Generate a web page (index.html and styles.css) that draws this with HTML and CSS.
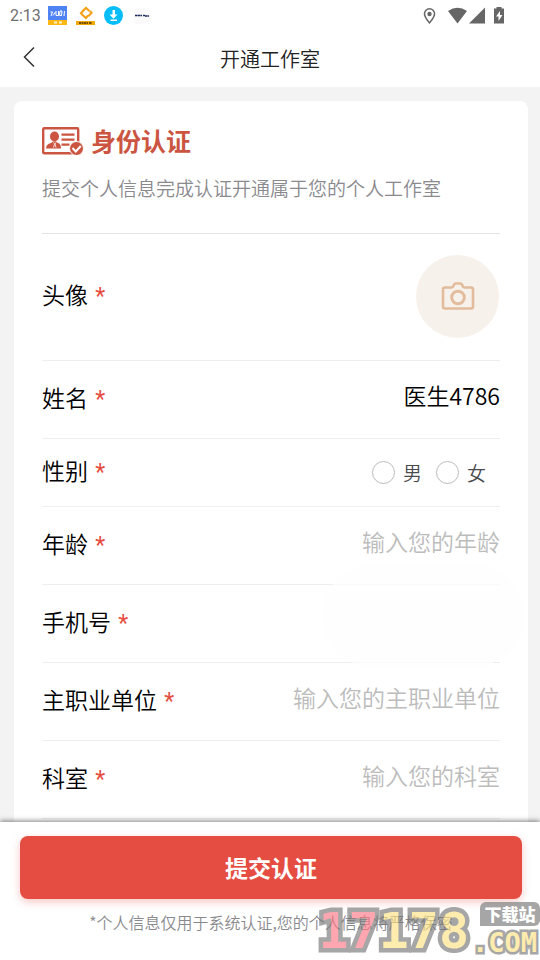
FILE: index.html
```html
<!DOCTYPE html>
<html lang="zh-CN">
<head>
<meta charset="utf-8">
<meta name="viewport" content="width=device-width, initial-scale=1">
<title>开通工作室</title>
<link rel="stylesheet" href="styles.css">
</head>
<body>
<div class="status">
  <span class="clock">2:13</span>
  <svg class="app" viewBox="0 0 19 19"><path fill="#4f83f5" d="M0 0h19v14H0z"/><path fill="#fdb813" d="M0 14h19v5H0z"/><path d="M2.500 6h2L3 10M5 9.500L7.500 6M8 5v4.500h2.500V5M12 5l-.5 4.500h2L14 5zM16.500 5l-.5 5" fill="none" stroke="#fff" stroke-width="1"/><path d="M6 16.500h3M11 16.500h3" stroke="#fff3c8" stroke-width="2"/></svg>
  <svg class="app" viewBox="0 0 19 19"><path d="M6.500 5L10 2l3.500 3M14 5l1.500 2-3 3M12 9.500L10 12l-3.500-3M6.500 9L5 7l3-3" fill="none" stroke="#f5a11b" stroke-width="2.200"/><path fill="#f2a90a" d="M0 15h19v4H0z"/><path d="M3 17h9M13 17h3" stroke="#4b3200" stroke-width="1.500" stroke-dasharray="2 .5"/></svg>
  <svg class="app" viewBox="0 0 19 19"><circle cx="9.500" cy="9.500" r="9.500" fill="#05bdf9"/><path d="M8.500 4h2.500v4.500h2.500l-4 4.200-4-4.200h3zM6.500 13.500h6.500V15H6.500z" fill="#fff"/></svg>
  <svg class="app last" viewBox="0 0 19 19"><path fill="#fafafa" d="M2 2h16v16H2z"/><path d="M3 9.500h7M11 9.500h2M13 10h4" stroke="#1d2c5e" stroke-width="1.600" stroke-dasharray="2.500 .3"/></svg>
  <svg class="signals" viewBox="0 0 84 20"><g fill="#666"><path fill-rule="evenodd" d="M9.500 2a5.800 5.800 0 0 0-5.800 5.800C3.700 12 9.500 18 9.500 18s5.800-6 5.800-10.200A5.800 5.800 0 0 0 9.500 2zm0 1.500a4.300 4.300 0 0 1 4.300 4.300c0 2.200-2.400 5.600-4.300 7.900-1.900-2.300-4.300-5.700-4.300-7.900a4.300 4.300 0 0 1 4.300-4.300z"/><circle cx="9.500" cy="8" r="2.200"/><path d="M28 5q9.500-6.500 19 0l-9.500 12.500zM65 1.500V17.500H49zM76.500 1h5v1.500H84V17.500H74V2.500h2.500z"/></g><path d="M80 5l-4 5.500h2.500V15l4-6H80z" fill="#fff"/></svg>
</div>
<header class="bar">
  <button class="back" type="button" aria-label="返回"><svg viewBox="0 0 12 20"><path d="M11 .5L1.500 10l9.500 9.500" fill="none" stroke="#333" stroke-width="1.500"/></svg></button>
  <h1>开通工作室</h1>
</header>
<main>
  <form class="card" id="apply">
    <div class="intro">
      <h2><svg viewBox="0 0 42 28"><rect x="1.200" y="1.200" width="35" height="25" rx="1" fill="none" stroke="#cb5541" stroke-width="2.400"/><g fill="#cb5541"><ellipse cx="12.500" cy="9.500" rx="4.500" ry="5"/><path d="M4 21.500q0-4.500 5-5.500l2-1.500h3l2 1.500q3 .5 3 5.500z"/><path d="M19.500 6.500h13v2.200h-13zM19.500 11.500h13v2.200h-13zM19.500 16.500h8v2.200h-8z"/><circle cx="34.500" cy="21.500" r="7" stroke="#fff"/></g><path d="M11.500 15.500l1 1.500-1 3.500M14 15.500l-1 1.500 1 3.500" stroke="#fff" fill="none" stroke-width=".8"/><path d="M30.500 21l3.300 3.500 5-5.500" fill="none" stroke="#fff" stroke-width="2"/></svg>身份认证</h2>
      <p>提交个人信息完成认证开通属于您的个人工作室</p>
    </div>
    <div class="row avatar-row">
      <span class="label">头像 <b>*</b></span>
      <button class="avatar" type="button" aria-label="上传头像"><svg viewBox="0 0 34 30"><g fill="none" stroke="#e2bc9c" stroke-width="2.600" stroke-linejoin="round"><path d="M4 6.500h6.500q1.500 0 2-1.800Q13.200 2.500 15 2.500h4q1.800 0 2.500 2.200.5 1.800 2 1.800H30q2 0 2 2v17q0 2-2 2H4q-2 0-2-2v-17q0-2 2-2z"/><circle cx="17" cy="16.500" r="6.300" stroke-width="3"/></g></svg></button>
    </div>
    <div class="row"><label class="label" for="name">姓名 <b>*</b></label><input class="field" id="name" type="text" value="医生4786"></div>
    <div class="row gender-row">
      <span class="label">性别 <b>*</b></span>
      <div class="options">
        <label><input type="radio" name="gender">男</label>
        <label><input type="radio" name="gender">女</label>
      </div>
    </div>
    <div class="row"><label class="label" for="age">年龄 <b>*</b></label><input class="field" id="age" type="text" placeholder="输入您的年龄"></div>
    <div class="row phone-row"><label class="label" for="phone">手机号 <b>*</b></label><input class="field" id="phone" type="tel"></div>
    <div class="row"><label class="label" for="unit">主职业单位 <b>*</b></label><input class="field" id="unit" type="text" placeholder="输入您的主职业单位"></div>
    <div class="row"><label class="label" for="dept">科室 <b>*</b></label><input class="field" id="dept" type="text" placeholder="输入您的科室"></div>
    <div class="row"></div>
  </form>
</main>
<footer>
  <button class="submit" type="submit" form="apply">提交认证</button>
  <p>*个人信息仅用于系统认证,您的个人信息将严格保密</p>
  <div class="mark">
    <span class="digits"><span class="pink">17</span>178</span>
    <span class="side"><span class="tag">下载站</span><span class="com">.COM</span></span>
  </div>
</footer>
</body>
</html>
```
FILE: styles.css
```css
* { box-sizing: border-box; }
body {
  margin: 0;
  height: 100vh;
  display: flex;
  flex-direction: column;
  background: #f3f3f3;
  color: #000;
  font-family: "Noto Sans CJK SC", sans-serif;
  font-weight: 350;
}
h1, h2, p { margin: 0; }
button, input { font: inherit; color: inherit; }
button { border: 0; padding: 0; background: none; cursor: pointer; }

.status {
  flex: none;
  height: 31px;
  padding: 0 36px 0 10px;
  display: flex;
  align-items: center;
  gap: 9px;
  background: #fff;
}
.clock { width: 29px; font: 16px/30px Roboto, sans-serif; color: #707070; }
.app { width: 19px; height: 19px; }
.signals { width: 84px; height: 20px; margin-left: auto; }

.bar {
  flex: none;
  position: relative;
  height: 56px;
  display: flex;
  align-items: center;
  justify-content: center;
  background: #fff;
}
.back { position: absolute; left: 19px; top: 12px; width: 20px; height: 28px; }
.back svg { display: block; width: 12px; height: 20px; margin: 0 auto; }
h1 { font-size: 20px; line-height: 30px; font-weight: inherit; color: #222; }

main { flex: 1; min-height: 0; overflow: hidden; padding: 14px 12px 0 14px; }
.card { padding: 0 28px; background: #fff; border-radius: 8px; }
.intro { height: 133px; padding-top: 21px; border-bottom: 1px solid #e4e4e4; }
h2 {
  display: flex;
  align-items: center;
  gap: 7px;
  font-size: 25px;
  line-height: 37px;
  font-weight: 700;
  color: #cb5541;
}
h2 svg { width: 42px; height: 28px; }
.intro p { margin-top: 15px; font-size: 19px; line-height: 28px; color: #8a8a8e; white-space: nowrap; }

.row {
  position: relative;
  height: 78px;
  display: flex;
  align-items: center;
  justify-content: space-between;
  gap: 12px;
  border-bottom: 1px solid #eee;
  font-size: 23px;
}
.label { flex: none; padding-bottom: 6px; white-space: nowrap; }
.label b { margin-left: 2px; font-family: Roboto, sans-serif; font-weight: 400; color: #e54d42; }
.avatar-row { height: 127px; }
.gender-row { height: 68px; }
.avatar {
  width: 83px;
  height: 83px;
  margin: 0 1px 2px 0;
  border-radius: 50%;
  background: #f7f1eb;
  display: flex;
  align-items: center;
  justify-content: center;
}
.avatar svg { width: 34px; height: 30px; }
.field {
  flex: 1;
  min-width: 0;
  height: 44px;
  padding: 0 0 10px;
  border: 0;
  outline: 0;
  background: none;
  text-align: right;
}
.field::placeholder { color: #bcbcbc; opacity: 1; }
.options { display: flex; gap: 14px; margin-right: 14px; font-size: 19px; color: #4a4b4f; }
.options label { display: flex; align-items: center; gap: 8px; }
.options input {
  appearance: none;
  width: 23px;
  height: 23px;
  margin: 0;
  border: 1px solid #bdbdbd;
  border-radius: 50%;
  background: #fff;
}
.phone-row::after {
  content: "";
  position: absolute;
  right: -24px;
  top: -20px;
  width: 202px;
  height: 102px;
  border-radius: 60px;
  background: rgba(253, 253, 253, .7);
  pointer-events: none;
}

footer {
  flex: none;
  position: relative;
  height: 138px;
  padding: 14px 18px 0 20px;
  background: #fff;
  box-shadow: 0 -1px 5px rgba(0, 0, 0, .5);
}
.submit {
  display: block;
  width: 100%;
  height: 63px;
  padding-bottom: 2px;
  border-radius: 8px;
  background: #e54d42;
  box-shadow: 0 3px 8px rgba(229, 77, 66, .3);
  color: #fff;
  font-size: 23px;
  font-weight: 700;
}
footer p { margin-top: 11px; font-size: 16px; line-height: 24px; color: #8a8a8e; text-align: center; white-space: nowrap; }

.mark {
  position: absolute;
  right: 0;
  bottom: 0;
  height: 60px;
  display: flex;
  align-items: flex-end;
  opacity: .65;
  pointer-events: none;
  paint-order: stroke fill;
}
.digits {
  font: 700 50px/58px "DejaVu Sans Mono", monospace;
  color: #fde283;
  -webkit-text-stroke: 9px #777;
}
.pink { color: #ff7886; }
.side { display: flex; flex-direction: column; align-items: flex-end; width: 71px; height: 58px; }
.tag {
  width: 60px;
  border-radius: 6px 6px 6px 0;
  background: #777;
  color: #fff;
  font-size: 17px;
  line-height: 24px;
  font-weight: 900;
  text-align: center;
}
.com {
  padding-right: 3px;
  font: 700 27px/34px "DejaVu Sans Mono", monospace;
  color: #fde283;
  -webkit-text-stroke: 5px #777;
}
```
